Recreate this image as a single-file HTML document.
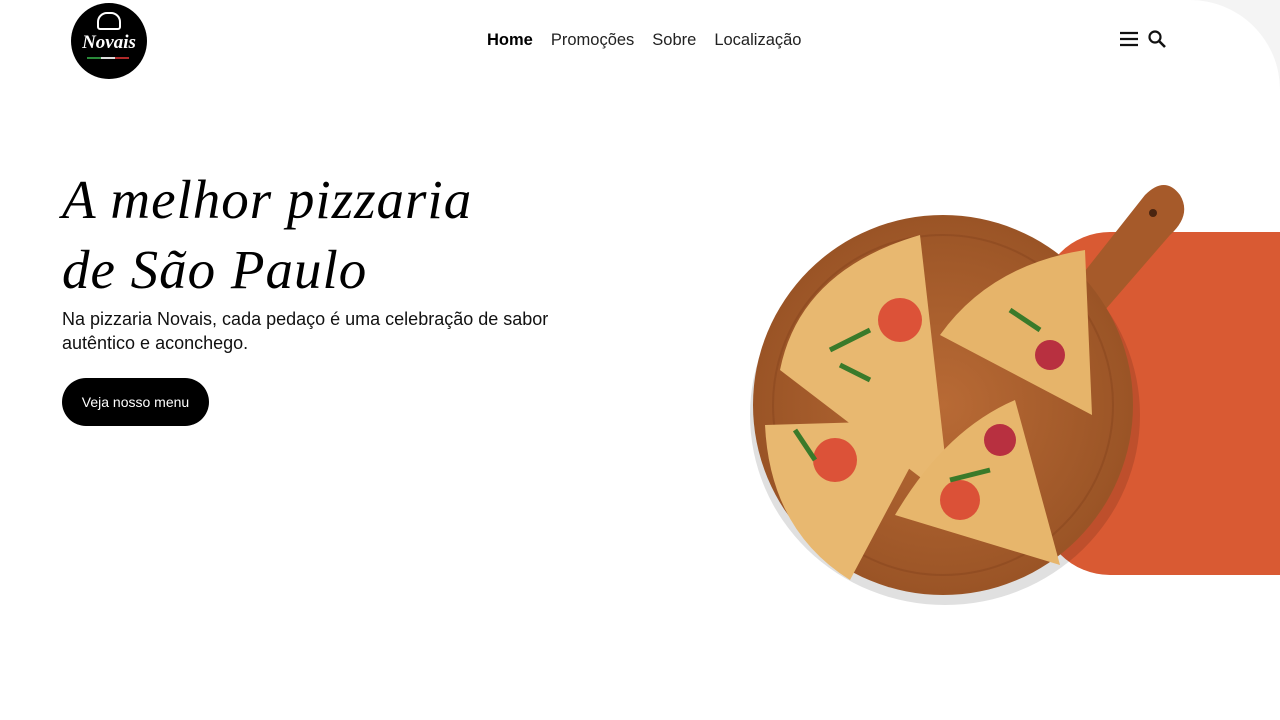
<!DOCTYPE html>
<html><head><meta charset="utf-8"><style>
body{margin:0;width:1280px;height:720px;background:#f4f4f4;overflow:hidden;font-family:"Liberation Sans",sans-serif}
.page{position:absolute;left:0;top:0;width:1280px;height:720px;background:#fff;border-top-right-radius:90px}
.nav{position:absolute;top:31px;left:487px;font-size:16.5px;color:#222}
.nav span{margin-right:18px}
h1{position:absolute;left:62px;top:165px;margin:0;font-family:"Liberation Serif",serif;font-style:italic;font-weight:normal;font-size:55px;line-height:70px;color:#000;letter-spacing:1px}
p{position:absolute;left:62px;top:307px;margin:0;font-size:18px;line-height:24px;color:#111;width:520px}
.btn{position:absolute;left:62px;top:378px;width:147px;height:48px;border-radius:24px;background:#000;color:#fff;font-size:14px;line-height:48px;text-align:center}
</style></head><body><div class="page">
<div style="position:absolute;left:71px;top:3px;width:76px;height:76px;border-radius:50%;background:#000"></div>
<div style="position:absolute;left:71px;top:32px;width:76px;text-align:center;color:#fff;font-family:'Liberation Serif',serif;font-style:italic;font-weight:bold;font-size:19px">Novais</div>
<div style="position:absolute;left:87px;top:57px;width:14px;height:2px;background:#2a8a3a"></div>
<div style="position:absolute;left:101px;top:57px;width:14px;height:2px;background:#ddd"></div>
<div style="position:absolute;left:115px;top:57px;width:14px;height:2px;background:#b02a2a"></div>
<div style="position:absolute;left:97px;top:12px;width:24px;height:18px;border:2px solid #fff;border-radius:10px 10px 3px 3px;box-sizing:border-box"></div>
<div class="nav"><span style="font-weight:bold;color:#000">Home</span><span>Promoções</span><span>Sobre</span><span>Localização</span></div>
<svg style="position:absolute;left:1119px;top:30px" width="50" height="20" viewBox="0 0 50 20"><path d="M1 3h18M1 9h18M1 15h18" stroke="#111" stroke-width="2.2"/><circle cx="36" cy="7" r="5.5" fill="none" stroke="#111" stroke-width="2.2"/><path d="M40 11l6 6" stroke="#111" stroke-width="2.6"/></svg>
<h1>A melhor pizzaria<br>de São Paulo</h1>
<p>Na pizzaria Novais, cada pedaço é uma celebração de sabor autêntico e aconchego.</p>
<div class="btn">Veja nosso menu</div>
<div style="position:absolute;left:1040px;top:232px;width:240px;height:343px;background:#d95a33;border-radius:70px 0 0 70px"></div>
<svg style="position:absolute;left:740px;top:170px" width="540" height="450" viewBox="0 0 540 450">
<defs><radialGradient id="w" cx="50%" cy="50%" r="50%"><stop offset="0" stop-color="#b86a35"/><stop offset="1" stop-color="#9a5426"/></radialGradient></defs>
<ellipse cx="205" cy="245" rx="195" ry="190" fill="#000" opacity=".12"/>
<path d="M330 120 L405 25 Q425 5 440 25 Q452 45 430 65 L365 140Z" fill="#a65a2a"/>
<circle cx="413" cy="43" r="4" fill="#4a2510"/>
<circle cx="203" cy="235" r="190" fill="url(#w)"/>
<circle cx="203" cy="235" r="170" fill="none" stroke="#8a4820" stroke-width="2" opacity=".6"/>
<path d="M180 65 L210 330 L40 200 Q60 100 180 65Z" fill="#e8b870"/>
<path d="M345 80 L352 245 L200 165 Q250 95 345 80Z" fill="#e6b46a"/>
<path d="M25 255 L195 250 L110 410 Q30 360 25 255Z" fill="#e8b870"/>
<path d="M275 230 L320 395 L155 345 Q205 260 275 230Z" fill="#e7b66c"/>
<circle cx="160" cy="150" r="22" fill="#d8382a" opacity=".8"/><circle cx="310" cy="185" r="15" fill="#b83040"/>
<circle cx="95" cy="290" r="22" fill="#d8382a" opacity=".8"/><circle cx="220" cy="330" r="20" fill="#d8382a" opacity=".8"/>
<circle cx="260" cy="270" r="16" fill="#b83040"/>
<path d="M90 180l40-20M100 195l30 15M270 140l30 20M210 310l40-10M55 260l20 30" stroke="#3a7a2a" stroke-width="5"/>
</svg>
</div></body></html>
